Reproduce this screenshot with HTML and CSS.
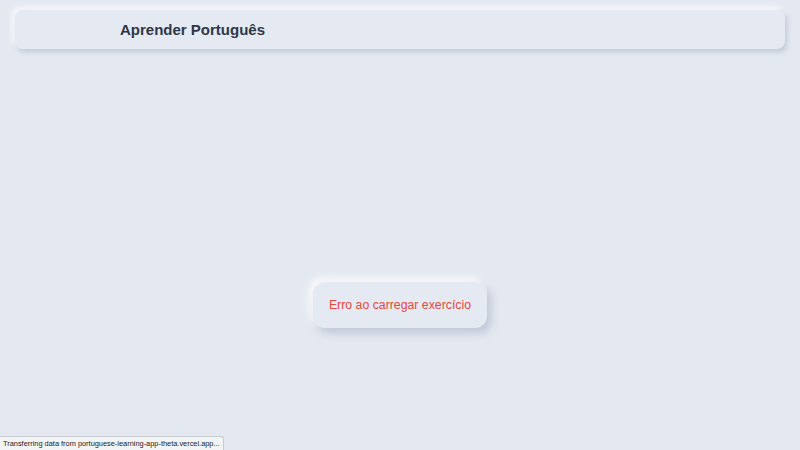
FILE: index.html
```html
<!DOCTYPE html>
<html lang="pt">
<head>
<meta charset="utf-8">
<title>Aprender Português</title>
<link rel="stylesheet" href="styles.css">
</head>
<body>
<div class="page">
  <header class="header">
    <h1 class="title">Aprender Português</h1>
  </header>
  <main class="main">
    <div class="error-card">Erro ao carregar exercício</div>
  </main>
</div>
<div class="status">Transferring data from portuguese-learning-app-theta.vercel.app...</div>
</body>
</html>
```
FILE: styles.css
```css
html, body {
  margin: 0;
  padding: 0;
  height: 100%;
}
body {
  background: #e4e8f0;
  font-family: "Liberation Sans", Arial, sans-serif;
  overflow: hidden;
}
.page {
  display: flex;
  flex-direction: column;
  height: 100%;
  padding: 10px 15px 0;
  box-sizing: border-box;
}
.header {
  height: 39px;
  border-radius: 8px;
  background: #e5e9f1;
  box-shadow: 2px 3px 5px rgba(163, 177, 198, 0.55), -3px -3px 6px rgba(255, 255, 255, 0.8);
  display: flex;
  align-items: center;
  padding-left: 105px;
}
.title {
  margin: 0;
  font-size: 15px;
  font-weight: 700;
  color: #2d3748;
}
.main {
  flex: 1;
  display: flex;
  align-items: center;
  justify-content: center;
  padding-top: 111px;
}
.error-card {
  width: 174px;
  height: 46px;
  box-sizing: border-box;
  border-radius: 12px;
  background: #e5e9f1;
  box-shadow: 4px 5px 8px rgba(163, 177, 198, 0.6), -4px -4px 8px rgba(255, 255, 255, 0.85);
  display: flex;
  align-items: center;
  justify-content: center;
  color: #e5473d;
  font-size: 12.3px;
}
.status {
  position: fixed;
  left: 0;
  bottom: 0;
  height: 13px;
  line-height: 13px;
  padding: 0 3px;
  font-size: 7.4px;
  color: #222;
  background: #f3f4f6;
  border: 1px solid #c8cbd0;
  border-left: none;
  border-bottom: none;
  border-top-right-radius: 3px;
  font-family: "Liberation Sans", Arial, sans-serif;
}
```
